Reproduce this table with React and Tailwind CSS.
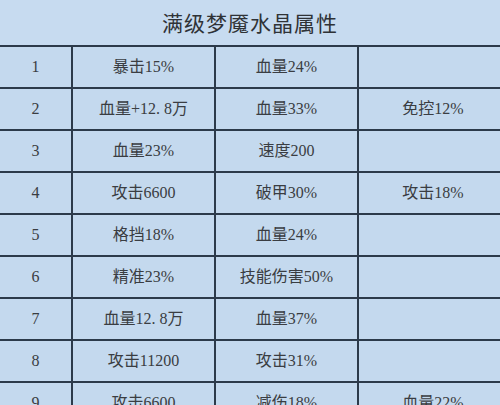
const rows = [
  ["1", "暴击15%", "血量24%", ""],
  ["2", "血量+12. 8万", "血量33%", "免控12%"],
  ["3", "血量23%", "速度200", ""],
  ["4", "攻击6600", "破甲30%", "攻击18%"],
  ["5", "格挡18%", "血量24%", ""],
  ["6", "精准23%", "技能伤害50%", ""],
  ["7", "血量12. 8万", "血量37%", ""],
  ["8", "攻击11200", "攻击31%", ""],
  ["9", "攻击6600", "减伤18%", "血量22%"],
];

const App = () => {
  return (
    <div
      className="w-[500px] h-[405px] overflow-hidden bg-[#c4d9ee] text-[#3a3d42]"
      style={{ fontFamily: '"Liberation Serif", "Noto Sans CJK SC", serif' }}
    >
      {/* Title */}
      <div
        className="h-[45px] flex items-center justify-center text-[21px] tracking-[1px] text-[#2f3236] bg-[#c7dbf0]"
        style={{ fontFamily: '"Noto Sans CJK SC", sans-serif' }}
      >
        满级梦魇水晶属性
      </div>

      {/* Table */}
      <div className="w-[507px] border-t-2 border-[#2c3a4a]">
        {rows.map((r) => (
          <div
            key={r[0]}
            className="grid grid-cols-[73px_143px_143px_148px] h-[42px] border-b-2 border-[#2c3a4a]"
          >
            {r.map((cell, i) => (
              <div
                key={i}
                className={`flex items-center justify-center whitespace-pre text-[16px] ${
                  i < 3 ? "border-r-2 border-[#2c3a4a]" : ""
                }`}
              >
                {cell}
              </div>
            ))}
          </div>
        ))}
      </div>
    </div>
  );
};

export default App;
